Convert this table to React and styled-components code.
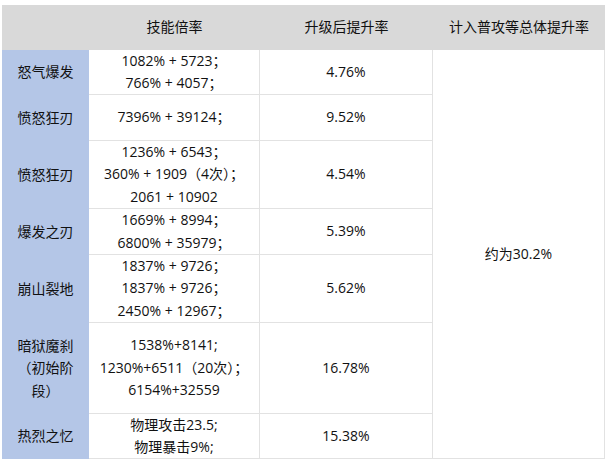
import React from 'react'
import styled, { createGlobalStyle } from 'styled-components'

const GlobalStyle = createGlobalStyle`
  body {
    margin: 0;
    background: #fff;
    font-family: 'Open Sans', 'Noto Sans CJK SC', sans-serif;
    color: #111;
  }
`

const Page = styled.div`
  padding: 5px 0 0 2px;
`

const Grid = styled.div`
  display: grid;
  grid-template-columns: 87px 171px 173px 172px;
  grid-template-rows: 45px 45px 46px 68px 46px 68px 91px 45px;
  width: 603px;
  font-size: 14px;
  line-height: 22.5px;
`

const Head = styled.div`
  background: #d9d9d9;
  display: flex;
  align-items: center;
  justify-content: center;
  text-align: center;
`

const Name = styled.div`
  background: #b4c6e7;
  display: flex;
  align-items: center;
  justify-content: center;
  text-align: center;
  padding: 0 10px;
`

const Cell = styled.div`
  box-sizing: border-box;
  display: flex;
  flex-direction: column;
  align-items: center;
  justify-content: center;
  text-align: center;
  border-right: 1px solid #e2e2e2;
  border-bottom: 1px solid #e2e2e2;
  white-space: nowrap;
`

const Total = styled(Cell)`
  grid-column: 4;
  grid-row: 2 / span 7;
`

const rows = [
  { name: '怒气爆发', rate: ['1082% + 5723；', '766% + 4057；'], up: '4.76%' },
  { name: '愤怒狂刃', rate: ['7396% + 39124；'], up: '9.52%' },
  { name: '愤怒狂刃', rate: ['1236% + 6543；', '360% + 1909（4次）；', '2061 + 10902'], up: '4.54%' },
  { name: '爆发之刃', rate: ['1669% + 8994；', '6800% + 35979；'], up: '5.39%' },
  { name: '崩山裂地', rate: ['1837% + 9726；', '1837% + 9726；', '2450% + 12967；'], up: '5.62%' },
  { name: ['暗狱魔刹', '（初始阶', '段）'], rate: ['1538%+8141;', '1230%+6511（20次）；', '6154%+32559'], up: '16.78%' },
  { name: '热烈之忆', rate: ['物理攻击23.5;', '物理暴击9%;'], up: '15.38%' }
]

const Lines = ({ items }) =>
  items.map((t, i) => <div key={i}>{t}</div>)

const App = () => {
  return (
    <Page>
      <GlobalStyle />
      <Grid>
        <Head />
        <Head>技能倍率</Head>
        <Head>升级后提升率</Head>
        <Head>计入普攻等总体提升率</Head>
        {rows.map((r, i) => (
          <React.Fragment key={i}>
            <Name>
              <div>
                {Array.isArray(r.name) ? <Lines items={r.name} /> : r.name}
              </div>
            </Name>
            <Cell>
              <Lines items={r.rate} />
            </Cell>
            <Cell>{r.up}</Cell>
            {i === 0 && <Total>约为30.2%</Total>}
          </React.Fragment>
        ))}
      </Grid>
    </Page>
  )
}

export default App
